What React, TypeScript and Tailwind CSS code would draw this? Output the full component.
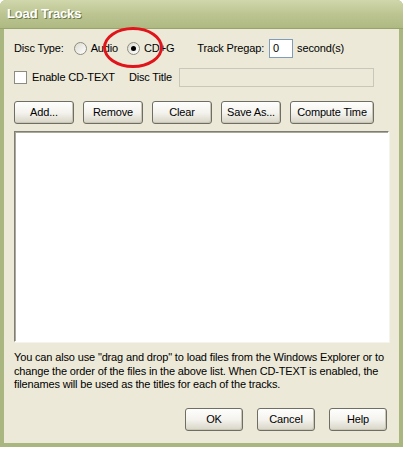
import React from "react";

const font = { fontFamily: '"Liberation Sans", Arial, sans-serif', letterSpacing: "-0.15px" };

const XpButton = ({ label, w }: { label: string; w: string }) => (
	<button
		className={`${w} h-[23px] rounded-[3px] border border-[#6e6e64] bg-gradient-to-b from-[#fefefd] via-[#f4f3ee] to-[#d8d5c6] text-[11px] text-black shadow-[inset_-1px_-1px_0_#c9c6b5]`}
	>
		{label}
	</button>
);

const Radio = ({ checked }: { checked?: boolean }) => (
	<span className="relative inline-flex h-[13px] w-[13px] items-center justify-center rounded-full border border-[#8c8c80] bg-gradient-to-br from-[#dcdad0] to-white">
		{checked && <span className="h-[5px] w-[5px] rounded-full bg-black" />}
	</span>
);

export default function App() {
	return (
		<div className="h-[449px] w-[405px] bg-white" style={font}>
			<div className="relative flex h-[447px] w-[403px] flex-col rounded-t-[6px] bg-[#a9b67f]">
				{/* title bar */}
				<div className="flex h-[29px] items-center rounded-t-[6px] border-b border-[#97a56d] bg-gradient-to-b from-[#d0d7ab] via-[#bcc592] to-[#aeb982] px-[7px]">
					<span
						className="text-[13px] font-bold text-white"
						style={{ textShadow: "1px 1px 0 #6d7a4a" }}
					>
						Load Tracks
					</span>
				</div>

				{/* body */}
				<div className="mx-[4px] mb-[4px] flex flex-1 flex-col bg-[#ece9d8] px-[10px] text-[11px] text-black">
					<div className="mt-[10px] flex h-[19px] items-center">
						<span>Disc Type:</span>
						<span className="ml-[10px] flex items-center gap-[4px]">
							<Radio />
							<span>Audio</span>
						</span>
						<span className="ml-[9px] flex items-center gap-[4px]">
							<Radio checked />
							<span>CD+G</span>
						</span>
						<span className="ml-[23px]">Track Pregap:</span>
						<span className="ml-[5px] flex h-[19px] w-[24px] items-center border border-[#7f9db9] bg-white pl-[3px]">
							0
						</span>
						<span className="ml-[4px]">second(s)</span>
					</div>

					<div className="mt-[10px] flex h-[19px] items-center">
						<span className="h-[13px] w-[13px] border border-[#8c8c80] bg-white" />
						<span className="ml-[5px]">Enable CD-TEXT</span>
						<span className="ml-[14px]">Disc Title</span>
						<span className="ml-[7px] h-[19px] w-[195px] border border-[#c9c7ba] bg-[#ece9d8]" />
					</div>

					<div className="mt-[14px] flex gap-[9px]">
						<XpButton label="Add..." w="w-[60px]" />
						<XpButton label="Remove" w="w-[60px]" />
						<XpButton label="Clear" w="w-[60px]" />
						<XpButton label="Save As..." w="w-[60px]" />
						<XpButton label="Compute Time" w="w-[84px]" />
					</div>

					<div className="mt-[7px] h-[211px] w-[375px] border border-t-[#7e7e74] border-l-[#7e7e74] border-r-white border-b-white bg-white shadow-[inset_1px_1px_0_#aca899,1px_1px_0_#f4f3ee]" />

					<p className="mt-[9px] w-[382px] text-[11px] leading-[13.5px]">
						You can also use "drag and drop" to load files from the Windows Explorer or to
						change the order of the files in the above list. When CD-TEXT is enabled, the
						filenames will be used as the titles for each of the tracks.
					</p>

					<div className="mt-[16px] flex justify-end gap-[14px] pr-[2px]">
						<XpButton label="OK" w="w-[58px]" />
						<XpButton label="Cancel" w="w-[58px]" />
						<XpButton label="Help" w="w-[58px]" />
					</div>
				</div>

				{/* annotation circle */}
				<div className="pointer-events-none absolute left-[103px] top-[27px] h-[41px] w-[60px] rounded-[50%] border-[3px] border-[#e0141a]" />
			</div>
		</div>
	);
}
